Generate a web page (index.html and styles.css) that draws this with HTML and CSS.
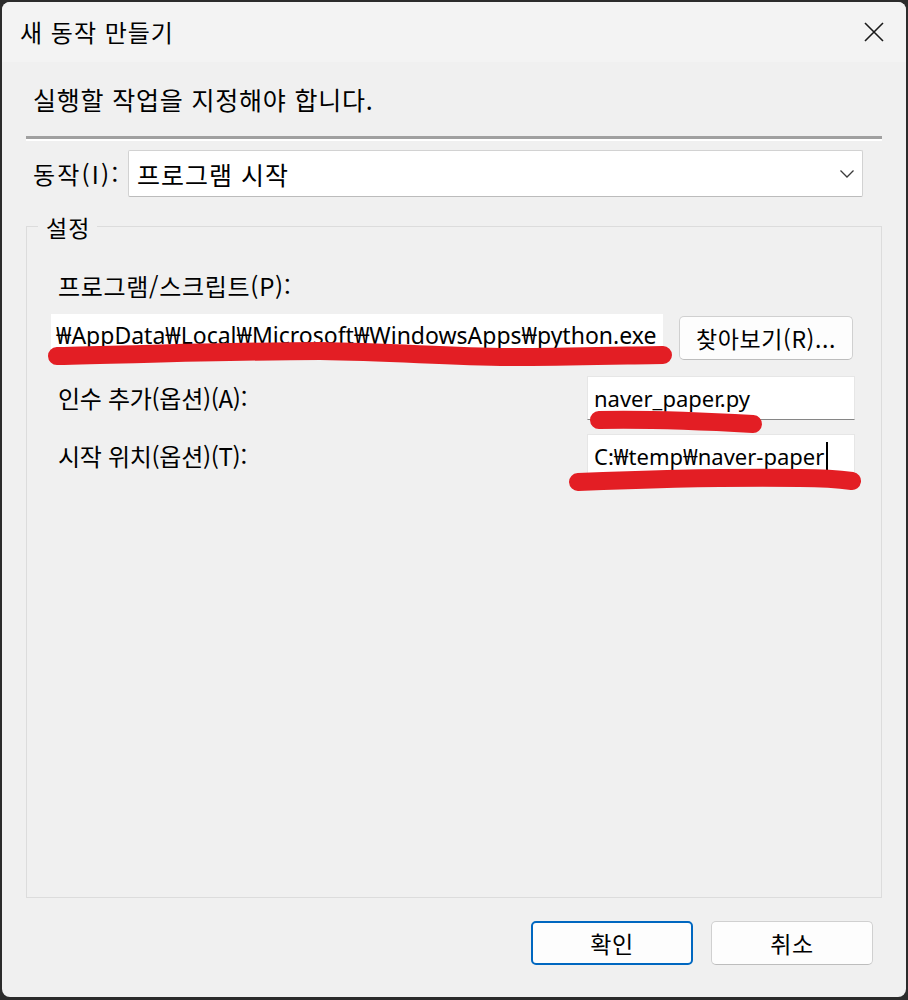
FILE: index.html
```html
<!DOCTYPE html>
<html lang="ko">
<head>
<meta charset="utf-8">
<title>새 동작 만들기</title>
<link rel="stylesheet" href="styles.css">
</head>
<body>
<div class="window">
  <div class="titlebar">
    <span class="title">새 동작 만들기</span>
    <span class="close">
      <svg width="20" height="20" viewBox="0 0 20 20"><path d="M1 1 L19 19 M19 1 L1 19" stroke="#1a1a1a" stroke-width="1.6" fill="none"/></svg>
    </span>
  </div>
  <div class="header">실행할 작업을 지정해야 합니다.</div>
  <div class="sep"></div>
  <div class="action-row">
    <span class="action-label">동작(I):</span>
    <div class="select">
      <span>프로그램 시작</span>
      <svg class="chev" width="14" height="8" viewBox="0 0 14 8"><path d="M0.5 0.5 L7 7 L13.5 0.5" stroke="#3a3a3a" stroke-width="1.3" fill="none"/></svg>
    </div>
  </div>
  <div class="group">
    <div class="legend">설정</div>
    <div class="label first">프로그램/스크립트(P):</div>
    <div class="prog-row">
      <div class="input prog">₩AppData₩Local₩Microsoft₩WindowsApps₩python.exe</div>
      <button class="btn browse">찾아보기(R)...</button>
    </div>
    <div class="field-row args">
      <span class="label">인수 추가(옵션)(A):</span>
      <div class="input small">naver_paper.py</div>
    </div>
    <div class="field-row start">
      <span class="label">시작 위치(옵션)(T):</span>
      <div class="input small focused">C:₩temp₩naver-paper<span class="caret"></span></div>
    </div>
  </div>
  <div class="footer">
    <button class="btn ok">확인</button>
    <button class="btn cancel">취소</button>
  </div>
</div>
<svg class="marks" width="908" height="1000" viewBox="0 0 908 1000">
  <g stroke="#e31e24" stroke-linecap="round" fill="none" stroke-width="18">
    <path d="M57 356 C150 354 240 351 320 351 C400 352 450 357 520 357 C590 357 640 355 663 355"/>
    <path d="M599 420 C650 419 700 421 753 424"/>
    <path d="M578 482 C650 479 720 477 800 478 C830 478 845 480 852 481"/>
  </g>
</svg>
</body>
</html>
```
FILE: styles.css
```css
html, body {
  margin: 0;
  padding: 0;
}
body {
  background: #2b2b2b;
  width: 908px;
  height: 1000px;
  position: relative;
  font-family: "Noto Sans CJK KR", "Noto Sans", sans-serif;
  color: #000;
}
.window {
  margin: 2px 2px 0 2px;
  height: 995px;
  background: #f0f0f0;
  border-radius: 8px;
  overflow: hidden;
  display: flex;
  flex-direction: column;
}
.titlebar {
  height: 60px;
  background: #f3f3f3;
  display: flex;
  align-items: center;
  justify-content: space-between;
  padding-left: 18px;
  padding-right: 22px;
}
.title {
  font-size: 24px;
  letter-spacing: 1px;
  line-height: 1;
}
.close {
  display: flex;
  width: 20px;
  height: 20px;
}
.header {
  height: 74px;
  display: flex;
  align-items: center;
  padding-left: 31px;
  font-size: 25px;
  letter-spacing: 0.8px;
}
.sep {
  margin: 0 24px;
  height: 2px;
  border-top: 3px solid #a0a0a0;
  background: #ffffff;
}
.action-row {
  margin-top: 9px;
  display: flex;
  align-items: center;
  padding-left: 31px;
  margin-right: 43px;
}
.action-label {
  width: 95px;
  font-size: 24px;
  letter-spacing: 2.2px;
}
.select {
  flex: 1;
  height: 45px;
  background: #fff;
  border: 1px solid #d2d2d2;
  border-bottom-color: #bcbcbc;
  border-radius: 2px;
  display: flex;
  align-items: center;
  justify-content: space-between;
  padding-left: 8px;
  padding-right: 8px;
  font-size: 25px;
  letter-spacing: 1px;
}
.chev {
  display: block;
}
.group {
  margin: 29px 24px 0 24px;
  height: 670px;
  border: 1px solid #dcdcdc;
  padding: 0 26px 0 24px;
}
.legend {
  width: fit-content;
  margin-top: -17px;
  margin-left: -13px;
  padding: 0 7px 0 8px;
  line-height: 34px;
  background: #f0f0f0;
  font-size: 23px;
  letter-spacing: 1px;
}
.label {
  font-size: 24px;
  letter-spacing: 0.7px;
  line-height: 34px;
  padding-left: 7px;
}
.field-row .label {
  letter-spacing: -0.3px;
}
.label.first {
  margin-top: 25px;
}
.prog-row {
  margin-top: 11px;
  display: flex;
  align-items: flex-start;
  gap: 16px;
}
.input {
  height: 44px;
  box-sizing: border-box;
  background: #fff;
  font-family: "Noto Sans", "Noto Sans CJK KR", sans-serif;
  font-size: 22px;
  display: flex;
  align-items: center;
  white-space: nowrap;
  overflow: hidden;
}
.input.prog {
  width: 612px;
  padding-left: 5px;
  font-size: 23px;
  padding-bottom: 2px;
  border-bottom: 1px solid #9a9a9a;
}
.btn {
  font-family: "Noto Sans CJK KR", sans-serif;
  font-size: 23px;
  letter-spacing: 0.6px;
  color: #000;
  background: #fdfdfd;
  border: 1px solid #d0d0d0;
  border-bottom-color: #bdbdbd;
  border-radius: 5px;
  padding: 0;
  cursor: default;
}
.browse {
  margin-top: 2px;
  width: 174px;
  height: 44px;
}
.field-row {
  display: flex;
  align-items: center;
  justify-content: space-between;
}
.field-row.args {
  margin-top: 16px;
}
.field-row.start {
  margin-top: 14px;
}
.input.small {
  width: 268px;
  padding-left: 6px;
  border: 1px solid #e6e6e6;
  border-bottom: 1px solid #868686;
}
.input.focused {
  border-bottom: 2px solid #0067c0;
}
.caret {
  display: inline-block;
  width: 2px;
  height: 28px;
  background: #000;
  margin-left: 2px;
}
.footer {
  margin-top: 23px;
  display: flex;
  justify-content: flex-end;
  gap: 18px;
  padding-right: 33px;
}
.ok, .cancel {
  width: 162px;
  height: 44px;
}
.ok {
  border: 2px solid #0067c0;
}
.marks {
  position: absolute;
  left: 0;
  top: 0;
  pointer-events: none;
}
```
